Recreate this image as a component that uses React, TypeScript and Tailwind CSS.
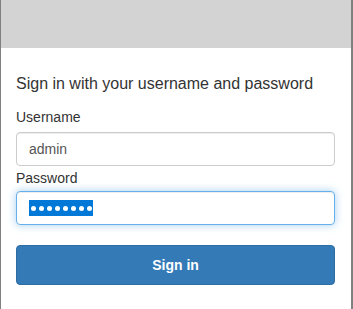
const font = { fontFamily: '"Liberation Sans", Arial, Helvetica, sans-serif' };

function Dots({ count }: { count: number }) {
  return (
    <span className="inline-flex h-4 items-center bg-[#0078d7]">
      {Array.from({ length: count }).map((_, i) => (
        <span key={i} className="flex h-4 w-2 items-center justify-center">
          <span className="h-[5px] w-[5px] rounded-full bg-white" />
        </span>
      ))}
    </span>
  );
}

export default function App() {
  return (
    <div
      className="flex h-[309px] w-[353px] flex-col border-l border-r-2 border-[#808080] bg-white text-[#333]"
      style={font}
    >
      <div className="h-12 shrink-0 bg-[#d3d3d3]" />

      <div className="flex flex-col pl-[15px] pr-4">
        <h1 className="mt-[25px] text-[16px] leading-[22px] font-normal">
          Sign in with your username and password
        </h1>

        <label className="mt-3 text-[14px] leading-5">Username</label>
        <div className="mt-[5px] flex h-[34px] items-center rounded border border-[#ccc] px-3 text-[14px] text-[#555] shadow-[inset_0_1px_1px_rgba(0,0,0,0.075)]">
          admin
        </div>

        <label className="mt-[2px] text-[14px] leading-5">Password</label>
        <div className="mt-[3px] flex h-[34px] items-center rounded border border-[#66afe9] px-3 shadow-[inset_0_1px_1px_rgba(0,0,0,0.075),0_0_8px_rgba(102,175,233,0.6)]">
          <Dots count={8} />
        </div>

        <button
          type="button"
          className="mt-5 flex h-10 items-center justify-center rounded border border-[#2e6da4] bg-[#337ab7] text-[14px] font-bold text-white"
        >
          Sign in
        </button>
      </div>
    </div>
  );
}
